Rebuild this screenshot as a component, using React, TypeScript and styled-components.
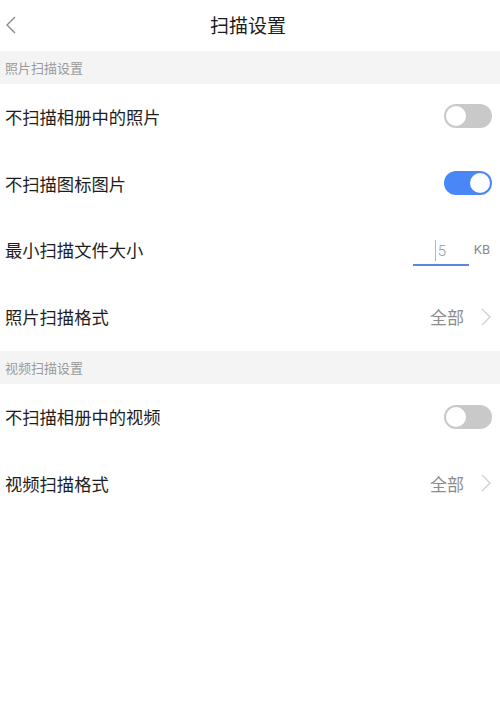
import React from "react";
import styled, { createGlobalStyle } from "styled-components";

const Global = createGlobalStyle`
  html, body { margin: 0; padding: 0; background: #fff; }
  body { font-family: "Noto Sans CJK SC", "Noto Sans", sans-serif; }
`;

const Page = styled.div`
  width: 500px;
  min-height: 711px;
  background: #fff;
  display: flex;
  flex-direction: column;
`;

const NavBar = styled.div`
  height: 51px;
  display: flex;
  align-items: center;
  justify-content: center;
  position: relative;
`;

const Back = styled.div`
  position: absolute;
  left: 5px;
  top: 16px;
  width: 12px;
  height: 18px;
  display: flex;
`;

const Title = styled.div`
  font-size: 19px;
  color: #1c1c1c;
  line-height: 1;
  margin-top: -3px;
  margin-left: -4px;
`;

const SectionHeader = styled.div`
  height: 33px;
  background: #f4f4f4;
  display: flex;
  align-items: center;
  padding-left: 5px;
  font-size: 13px;
  color: #9a9a9a;
`;

const Row = styled.div`
  height: 66.8px;
  display: flex;
  align-items: center;
  justify-content: space-between;
  padding: 0 8px 2px 5px;
  box-sizing: border-box;
`;

const Label = styled.div`
  font-size: 17.3px;
  color: #1e1e1e;
`;

const Toggle = styled.div<{ $on?: boolean }>`
  width: 48px;
  height: 24px;
  border-radius: 12px;
  background: ${(p) => (p.$on ? "#4a87f6" : "#c9c9c9")};
  display: flex;
  align-items: center;
  justify-content: ${(p) => (p.$on ? "flex-end" : "flex-start")};
  padding: 0 2px;
  box-sizing: border-box;
`;

const Knob = styled.div`
  width: 20px;
  height: 20px;
  border-radius: 50%;
  background: #fff;
`;

const InputGroup = styled.div`
  display: flex;
  align-items: center;
  gap: 5px;
  margin-right: 2px;
`;

const InputBox = styled.div`
  width: 56px;
  height: 28px;
  border-bottom: 2px solid #5a87e0;
  display: flex;
  align-items: center;
  padding-left: 22px;
  box-sizing: border-box;
  margin-top: 4px;
`;

const Caret = styled.div`
  width: 1px;
  height: 21px;
  background: #b5b5b5;
  margin-right: 2px;
`;

const InputValue = styled.span`
  font-family: "Roboto", "Noto Sans", sans-serif;
  font-size: 15px;
  color: #999;
  font-weight: 300;
`;

const Unit = styled.span`
  font-family: "Roboto", "Noto Sans", sans-serif;
  font-size: 13px;
  color: #8a8a8a;
`;

const Value = styled.div`
  display: flex;
  align-items: center;
  gap: 17px;
  font-size: 17px;
  color: #8c8c8c;
  margin-right: 1px;
`;

const Chevron = () => (
  <svg width="10" height="18" viewBox="0 0 10 18">
    <path d="M1 1 L9 9 L1 17" fill="none" stroke="#cfcfcf" strokeWidth="1.3" />
  </svg>
);

const SwitchRow = ({ label, on }: { label: string; on?: boolean }) => (
  <Row>
    <Label>{label}</Label>
    <Toggle $on={on}>
      <Knob />
    </Toggle>
  </Row>
);

const LinkRow = ({ label, value }: { label: string; value: string }) => (
  <Row>
    <Label>{label}</Label>
    <Value>
      {value}
      <Chevron />
    </Value>
  </Row>
);

export default function App() {
  return (
    <Page>
      <Global />
      <NavBar>
        <Back>
          <svg width="12" height="18" viewBox="0 0 12 18">
            <path d="M10 1 L2 9 L10 17" fill="none" stroke="#8a8a8a" strokeWidth="1.4" />
          </svg>
        </Back>
        <Title>扫描设置</Title>
      </NavBar>
      <SectionHeader>照片扫描设置</SectionHeader>
      <SwitchRow label="不扫描相册中的照片" />
      <SwitchRow label="不扫描图标图片" on />
      <Row>
        <Label>最小扫描文件大小</Label>
        <InputGroup>
          <InputBox>
            <Caret />
            <InputValue>5</InputValue>
          </InputBox>
          <Unit>KB</Unit>
        </InputGroup>
      </Row>
      <LinkRow label="照片扫描格式" value="全部" />
      <SectionHeader>视频扫描设置</SectionHeader>
      <SwitchRow label="不扫描相册中的视频" />
      <LinkRow label="视频扫描格式" value="全部" />
    </Page>
  );
}
